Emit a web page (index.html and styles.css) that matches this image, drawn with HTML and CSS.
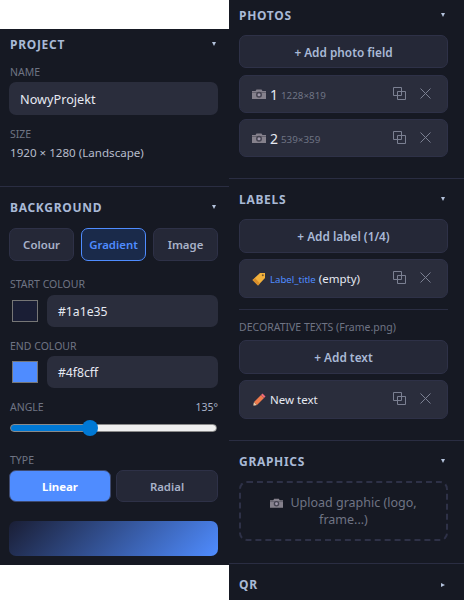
FILE: index.html
```html
<!DOCTYPE html>
<html lang="en">
<head>
<meta charset="utf-8">
<title>Editor panels</title>
<link rel="stylesheet" href="styles.css">
</head>
<body>
<svg class="defs" width="0" height="0" aria-hidden="true">
  <symbol id="cam" viewBox="0 0 14 10">
    <path d="M0 2h3.500l1-1.500h5l1 1.500H14v8H0z" fill="#85818c"/>
    <path d="M0 3h14v1H0z" fill="#65626e"/>
    <circle cx="7" cy="5.800" r="3" fill="#444350"/>
    <circle cx="7" cy="5.800" r="1.500" fill="#9f98aa"/>
  </symbol>
  <symbol id="copy" viewBox="0 0 13 13">
    <path d="M.5.500h8v8h-8zM4.500 4.500h8v8h-8z" fill="none" stroke="currentColor" stroke-width="1"/>
  </symbol>
  <symbol id="close" viewBox="0 0 11 11">
    <path d="M.5.500l10 10M10.500.500l-10 10" fill="none" stroke="currentColor" stroke-width="1"/>
  </symbol>
  <symbol id="tag" viewBox="0 0 14 14">
    <path d="M8 1h5v5l-7 7.500L.5 8z" fill="#f2b13c"/>
    <path d="M.5 8L6 13.500l2-2L3 6z" fill="#d98e2b"/>
    <circle cx="10.800" cy="3.200" r="1" fill="#7a5a2a"/>
  </symbol>
  <symbol id="pencil" viewBox="0 0 14 14">
    <path d="M1 13l1-4 3 3z" fill="#e9c9a4"/>
    <path d="M1 13l.4-1.600 1.200 1.200z" fill="#5a4a55"/>
    <path d="M2 9l7-7 3 3-7 7z" fill="#ee7b4d"/>
    <path d="M9 2l1.500-1.500 3 3L12 5z" fill="#ef6a78"/>
  </symbol>
</svg>
<main class="app">
  <div class="col-left">
    <aside class="panel">
      <section class="section project">
        <header class="head"><h2>PROJECT</h2><span class="caret"></span></header>
        <div class="label">NAME</div>
        <div class="field name-field">NowyProjekt</div>
        <div class="label size-label">SIZE</div>
        <div class="value">1920 × 1280 (Landscape)</div>
      </section>
      <section class="section background">
        <header class="head"><h2>BACKGROUND</h2><span class="caret"></span></header>
        <div class="tabs">
          <button class="btn">Colour</button>
          <button class="btn active">Gradient</button>
          <button class="btn">Image</button>
        </div>
        <div class="label start-label">START COLOUR</div>
        <div class="color-row">
          <span class="swatch dark"></span>
          <div class="field hex">#1a1e35</div>
        </div>
        <div class="label end-label">END COLOUR</div>
        <div class="color-row">
          <span class="swatch blue"></span>
          <div class="field hex">#4f8cff</div>
        </div>
        <div class="label angle-label"><span>ANGLE</span><span class="angle-value">135°</span></div>
        <input class="range" type="range" min="0" max="360" value="135" aria-label="Angle">
        <div class="label type-label">TYPE</div>
        <div class="types">
          <button class="btn type primary">Linear</button>
          <button class="btn type">Radial</button>
        </div>
        <div class="preview"></div>
      </section>
    </aside>
  </div>
  <aside class="panel right">
    <section class="section photos">
      <header class="head"><h2>PHOTOS</h2><span class="caret"></span></header>
      <button class="add">+ Add photo field</button>
      <div class="row photo-row">
        <svg class="emoji cam"><use href="#cam"/></svg>
        <span class="num">1</span><span class="dim">1228×819</span>
        <svg class="act copy"><use href="#copy"/></svg><svg class="act close"><use href="#close"/></svg>
      </div>
      <div class="row photo-row">
        <svg class="emoji cam"><use href="#cam"/></svg>
        <span class="num">2</span><span class="dim">539×359</span>
        <svg class="act copy"><use href="#copy"/></svg><svg class="act close"><use href="#close"/></svg>
      </div>
    </section>
    <section class="section labels">
      <header class="head"><h2>LABELS</h2><span class="caret"></span></header>
      <button class="add tall">+ Add label (1/4)</button>
      <div class="row tall-row">
        <svg class="emoji"><use href="#tag"/></svg>
        <span class="key">Label_title</span><span class="text">(empty)</span>
        <svg class="act copy"><use href="#copy"/></svg><svg class="act close"><use href="#close"/></svg>
      </div>
      <hr class="sep">
      <div class="deco">DECORATIVE TEXTS (Frame.png)</div>
      <button class="add tall">+ Add text</button>
      <div class="row tall-row">
        <svg class="emoji"><use href="#pencil"/></svg>
        <span class="text">New text</span>
        <svg class="act copy"><use href="#copy"/></svg><svg class="act close"><use href="#close"/></svg>
      </div>
    </section>
    <section class="section graphics">
      <header class="head"><h2>GRAPHICS</h2><span class="caret"></span></header>
      <div class="upload"><div class="upload-text"><svg class="emoji cam inline"><use href="#cam"/></svg>Upload graphic (logo, frame...)</div></div>
    </section>
    <section class="section qr">
      <header class="head"><h2>QR</h2><span class="caret side"></span></header>
    </section>
  </aside>
</main>
</body>
</html>
```
FILE: styles.css
```css
* { box-sizing: border-box; }
html, body { margin: 0; height: 600px; overflow: hidden; background: #fff; }
body { font-family: "Noto Sans", "Open Sans", sans-serif; color: #e6e9f2; }
.defs { position: absolute; }
.app { display: flex; width: 464px; height: 600px; align-items: flex-start; }
.col-left { width: 229px; padding-top: 29px; }
.panel { background: #161923; }
.col-left .panel { height: 536px; }
.right { width: 235px; height: 600px; }

.section { padding: 14px 10px 0; border-bottom: 1px solid #2a2d42; }
.section:first-child { padding-top: 9px; }
.section:last-child { border-bottom: 0; }
.head { display: flex; justify-content: space-between; align-items: center; height: 14px; width: 209px; margin-bottom: 13px; }
.right .head { margin-bottom: 12px; }
h2 { margin: 0; font-size: 12px; font-weight: 700; letter-spacing: .7px; line-height: 14px; color: #a9b9d6; }
.caret { width: 0; height: 0; margin: 0 3px 2px 0; border-left: 2.500px solid transparent; border-right: 2.500px solid transparent; border-top: 4px solid #b4c2dc; }
.caret.side { margin: 0 3px 0 0; border-top: 2.500px solid transparent; border-bottom: 2.500px solid transparent; border-left: 4px solid #b4c2dc; border-right: 0; }

.label { font-size: 10.500px; line-height: 14px; color: #6f7484; display: flex; justify-content: space-between; }
.field { background: #2a2d3c; border-radius: 7px; font-size: 12.700px; color: #e6e9f2; display: flex; align-items: center; padding: 0 11px; margin-left: -1px; }
.name-field { height: 33px; margin-top: 3px; margin-right: 1px; }
.size-label { margin-top: 12px; }
.value { font-size: 11.600px; line-height: 16px; margin-top: 4px; color: #b6bccb; }
.project { height: 158px; }
.tabs { display: flex; gap: 7px; margin-left: -1px; margin-right: 1px; }
.btn { flex: 1; height: 33px; border-radius: 7px; border: 1px solid #2e3147; background: #252837; color: #a9b2c8; font: 600 11.400px "Noto Sans", sans-serif; padding: 0; }
.btn.active { background: #1a2a4a; border-color: #4f8cff; color: #4f8cff; }
.start-label { margin-top: 16px; }
.color-row { display: flex; align-items: center; margin-top: 4px; margin-right: 1px; }
.swatch { width: 26px; height: 22px; margin: 0 9px 0 2px; border: 1px solid #767676; flex: none; }
.swatch.dark { background: #1a1e35; }
.swatch.blue { background: #4f8cff; }
.hex { flex: 1; height: 32px; margin-left: 0; font-size: 12.200px; }
.end-label { margin-top: 12px; margin-bottom: -1px; }
.angle-label { margin-top: 12px; }
.angle-value { color: #a9b2c8; margin-right: 1px; }
.range { display: block; width: 207px; height: 16px; margin: 6px 0 0; padding: 0; appearance: none; -webkit-appearance: none; background: transparent; }
.range::-webkit-slider-runnable-track { height: 8px; border-radius: 4px; border: 1px solid #8a8a8a; background: linear-gradient(90deg, #0078d4 0 39%, #efefef 39% 100%); }
.range::-webkit-slider-thumb { -webkit-appearance: none; width: 16px; height: 16px; margin-top: -5px; border-radius: 50%; background: #0078d4; border: 0; }
.type-label { margin-top: 17px; }
.types { display: flex; gap: 5px; margin: 3px 1px 0 -1px; }
.type { height: 32px; }
.btn.primary { background: #4f8cff; color: #fff; font-weight: 700; border-color: #3e4a70; }
.preview { height: 35px; margin: 19px 1px 0 -1px; border-radius: 7px; background: linear-gradient(135deg, #1a1e35, #4f8cff); }

.add { display: block; width: 209px; height: 33px; border-radius: 7px; border: 1px solid #2e3147; background: #252837; color: #a9b9d6; font: 600 11.800px "Noto Sans", sans-serif; padding: 0; }
.add.tall { height: 34px; }
.row { display: flex; align-items: center; width: 209px; height: 38px; margin-top: 7px; padding: 0 16px 0 12px; background: #2a2d3c; border: 1px solid #2e3147; border-radius: 7px; }
.tall-row { height: 39px; margin-top: 6px; }
.photo-row { margin-top: 6px; }
.add + .photo-row { margin-top: 7px; }
.emoji { width: 14px; height: 14px; flex: none; margin-right: 4px; }
.cam { height: 10px; }
.num { font-size: 14px; color: #e6e9f2; margin-right: 3px; }
.dim { font-size: 9.800px; color: #6f7484; margin-top: 2px; }
.key { font-size: 9.600px; color: #4f8cff; margin-right: 3px; margin-top: 1px; }
.text { font-size: 11.500px; color: #e6e9f2; }
.act { flex: none; color: #7b8092; margin-bottom: 2px; }
.copy { width: 13px; height: 13px; margin-left: auto; }
.close { width: 11px; height: 11px; margin-left: 14px; }
.photos { height: 179px; }
.labels { height: 262px; }
.graphics { height: 123px; }
.sep { border: 0; border-top: 1px solid #2a2d42; margin: 11px 0 0; width: 209px; }
.deco { font-size: 10.500px; line-height: 14px; color: #6f7484; margin-top: 10px; margin-bottom: 6px; }
.upload { width: 209px; height: 60px; border: 2px dashed #2e3147; border-radius: 8px; display: flex; align-items: center; justify-content: center; text-align: center; padding: 0 20px; }
.upload-text { font-size: 12.500px; line-height: 17px; color: #6f7484; }
.inline { display: inline-block; width: 13px; height: 10px; margin-right: 7px; vertical-align: -1px; }
```
